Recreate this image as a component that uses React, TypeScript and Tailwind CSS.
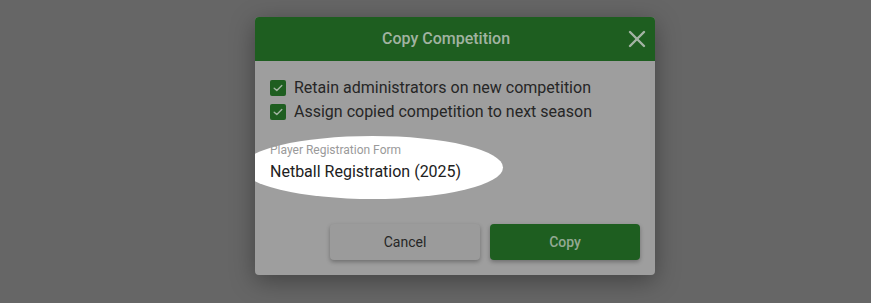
import { X } from 'lucide-react';

function Check() {
  return (
    <span className="flex h-4 w-4 shrink-0 items-center justify-center rounded-[2px] bg-[#1e5e20]">
      <svg width="12" height="12" viewBox="0 0 12 12" fill="none">
        <path d="M2.2 6.2L4.8 8.6L9.8 3.6" stroke="#a3b5a3" strokeWidth="1.4" strokeLinecap="round" strokeLinejoin="round" />
      </svg>
    </span>
  );
}

export default function App() {
  return (
    <div
      className="h-[303px] w-[871px] overflow-hidden bg-[#666666] pl-[255px] pt-[17px]"
      style={{ fontFamily: 'Roboto, "Liberation Sans", sans-serif' }}
    >
      <div className="w-[400px] overflow-hidden rounded-[4px] bg-[#9e9e9e] shadow-[0_6px_24px_rgba(0,0,0,0.35)]">
        {/* Header */}
        <div className="flex h-[44px] items-center bg-[#1e5e20] pl-[14px] pr-[4px]">
          <span className="flex-1 text-center text-[16px] font-medium text-[#a1b3a1]">Copy Competition</span>
          <X size={28} strokeWidth={2.1} className="shrink-0 text-[#a4b4a4]" />
        </div>

        {/* Body */}
        <div className="px-[15px] pt-[15px] pb-[15px]">
          <div className="flex h-6 items-center gap-2 text-[16px] text-[#262626]">
            <Check />
            <span>Retain administrators on new competition</span>
          </div>
          <div className="flex h-6 items-center gap-2 text-[16px] text-[#262626]">
            <Check />
            <span>Assign copied competition to next season</span>
          </div>

          {/* Highlighted field */}
          <div className="relative mt-[18px]">
            <div className="absolute left-[-28px] top-[-6px] h-[63px] w-[261px] rounded-[50%] bg-[linear-gradient(to_right,#999999_13px,#ffffff_13px)]" />
            <div className="relative">
              <div className="text-[12px] leading-4 text-[#9a9a9a]">Player Registration Form</div>
              <div className="mt-[2px] text-[16px] leading-6 text-[#212121]">Netball Registration (2025)</div>
            </div>
          </div>

          {/* Actions */}
          <div className="mt-[40px] flex justify-end gap-[10px]">
            <button
              type="button"
              className="h-[36px] w-[150px] rounded-[4px] bg-[#9b9b9b] text-[14px] text-[#262626] shadow-[0_2px_4px_rgba(0,0,0,0.3)]"
            >
              Cancel
            </button>
            <button
              type="button"
              className="h-[36px] w-[150px] rounded-[4px] bg-[#1e5e20] text-[14px] font-medium text-[#93a993] shadow-[0_2px_4px_rgba(0,0,0,0.3)]"
            >
              Copy
            </button>
          </div>
        </div>
      </div>
    </div>
  );
}
